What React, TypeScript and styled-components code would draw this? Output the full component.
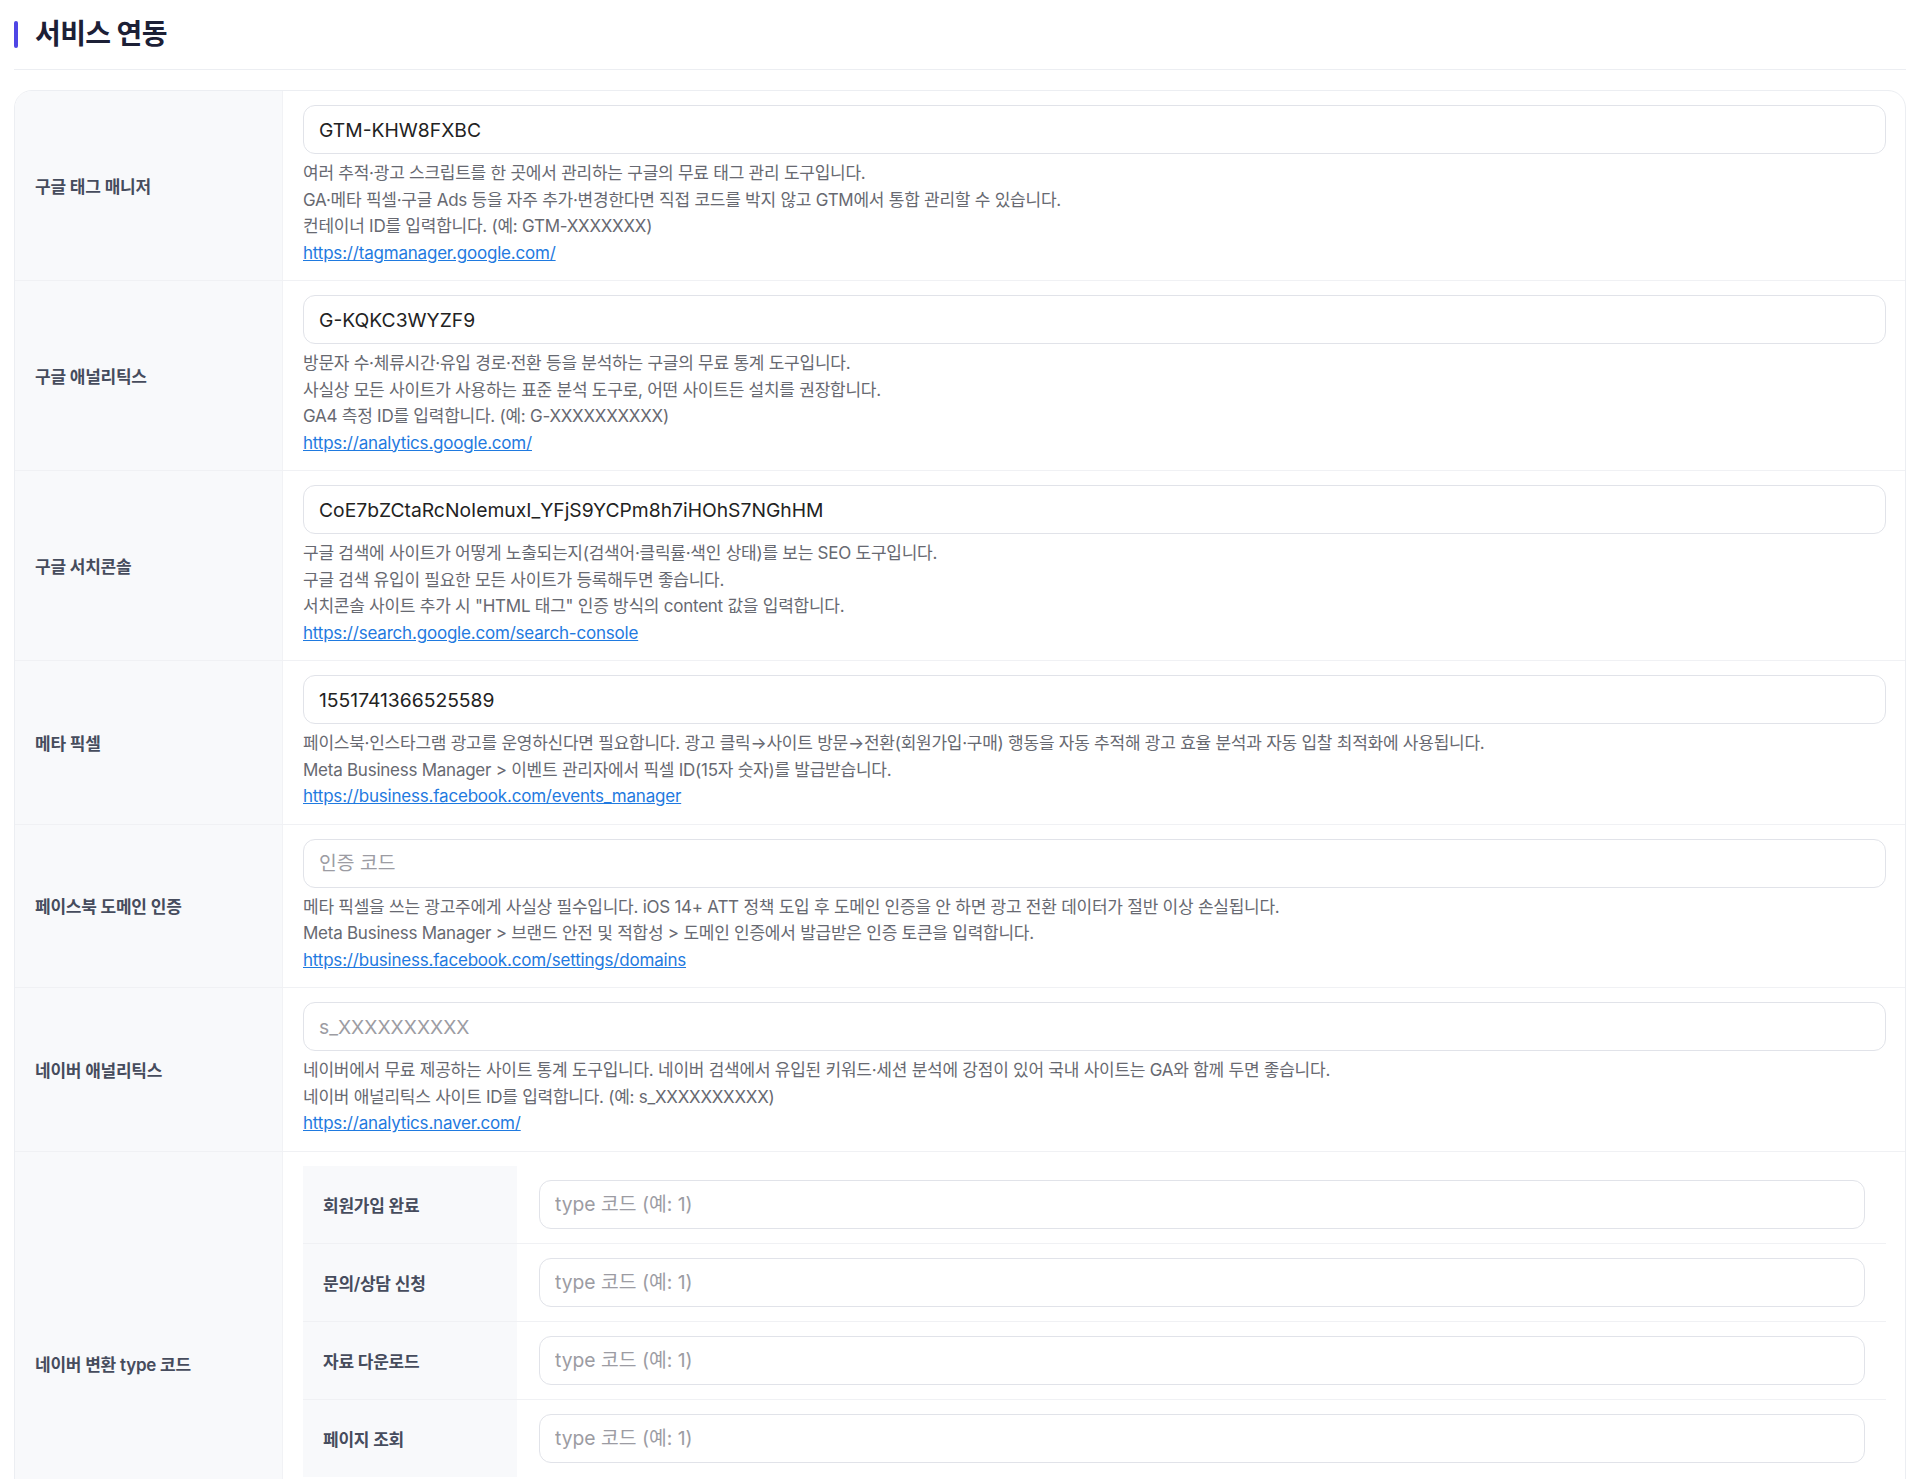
import styled, { createGlobalStyle } from 'styled-components';

interface Field {
  label: string;
  value?: string;
  placeholder?: string;
  lines: string[];
  link: string;
}

const fields: Field[] = [
  {
    label: '구글 태그 매니저',
    value: 'GTM-KHW8FXBC',
    lines: [
      '여러 추적·광고 스크립트를 한 곳에서 관리하는 구글의 무료 태그 관리 도구입니다.',
      'GA·메타 픽셀·구글 Ads 등을 자주 추가·변경한다면 직접 코드를 박지 않고 GTM에서 통합 관리할 수 있습니다.',
      '컨테이너 ID를 입력합니다. (예: GTM-XXXXXXX)',
    ],
    link: 'https://tagmanager.google.com/',
  },
  {
    label: '구글 애널리틱스',
    value: 'G-KQKC3WYZF9',
    lines: [
      '방문자 수·체류시간·유입 경로·전환 등을 분석하는 구글의 무료 통계 도구입니다.',
      '사실상 모든 사이트가 사용하는 표준 분석 도구로, 어떤 사이트든 설치를 권장합니다.',
      'GA4 측정 ID를 입력합니다. (예: G-XXXXXXXXXX)',
    ],
    link: 'https://analytics.google.com/',
  },
  {
    label: '구글 서치콘솔',
    value: 'CoE7bZCtaRcNoIemuxI_YFjS9YCPm8h7iHOhS7NGhHM',
    lines: [
      '구글 검색에 사이트가 어떻게 노출되는지(검색어·클릭률·색인 상태)를 보는 SEO 도구입니다.',
      '구글 검색 유입이 필요한 모든 사이트가 등록해두면 좋습니다.',
      '서치콘솔 사이트 추가 시 "HTML 태그" 인증 방식의 content 값을 입력합니다.',
    ],
    link: 'https://search.google.com/search-console',
  },
  {
    label: '메타 픽셀',
    value: '1551741366525589',
    lines: [
      '페이스북·인스타그램 광고를 운영하신다면 필요합니다. 광고 클릭→사이트 방문→전환(회원가입·구매) 행동을 자동 추적해 광고 효율 분석과 자동 입찰 최적화에 사용됩니다.',
      'Meta Business Manager > 이벤트 관리자에서 픽셀 ID(15자 숫자)를 발급받습니다.',
    ],
    link: 'https://business.facebook.com/events_manager',
  },
  {
    label: '페이스북 도메인 인증',
    placeholder: '인증 코드',
    lines: [
      '메타 픽셀을 쓰는 광고주에게 사실상 필수입니다. iOS 14+ ATT 정책 도입 후 도메인 인증을 안 하면 광고 전환 데이터가 절반 이상 손실됩니다.',
      'Meta Business Manager > 브랜드 안전 및 적합성 > 도메인 인증에서 발급받은 인증 토큰을 입력합니다.',
    ],
    link: 'https://business.facebook.com/settings/domains',
  },
  {
    label: '네이버 애널리틱스',
    placeholder: 's_XXXXXXXXXX',
    lines: [
      '네이버에서 무료 제공하는 사이트 통계 도구입니다. 네이버 검색에서 유입된 키워드·세션 분석에 강점이 있어 국내 사이트는 GA와 함께 두면 좋습니다.',
      '네이버 애널리틱스 사이트 ID를 입력합니다. (예: s_XXXXXXXXXX)',
    ],
    link: 'https://analytics.naver.com/',
  },
];

const conversions = ['회원가입 완료', '문의/상담 신청', '자료 다운로드', '페이지 조회'];

const GlobalStyle = createGlobalStyle`
  body {
    margin: 0;
    background: #fff;
    font-family: Inter, "Noto Sans CJK KR", sans-serif;
  }
  * { box-sizing: border-box; }
`;

export default function App() {
  return (
    <>
      <GlobalStyle />
      <Page>
        <Header>
          <Accent />
          <Title>서비스 연동</Title>
        </Header>
        <Card>
          {fields.map((f) => (
            <Row key={f.label}>
              <Label>{f.label}</Label>
              <Cell>
                <Input defaultValue={f.value} placeholder={f.placeholder} />
                <Help>
                  {f.lines.map((line) => (
                    <div key={line}>{line}</div>
                  ))}
                  <HelpLink href={f.link}>{f.link}</HelpLink>
                </Help>
              </Cell>
            </Row>
          ))}
          <Row>
            <Label>네이버 변환 type 코드</Label>
            <Cell>
              <SubTable>
                {conversions.map((name) => (
                  <SubRow key={name}>
                    <SubLabel>{name}</SubLabel>
                    <SubCell>
                      <Input placeholder="type 코드 (예: 1)" />
                    </SubCell>
                  </SubRow>
                ))}
              </SubTable>
              <Help>
                <div>네이버 검색광고 전환 추적 시 전환 유형별 type 코드를 지정합니다.</div>
                <div>네이버 검색광고 &gt; 도구 &gt; 전환추적 관리에서 확인할 수 있습니다.</div>
                <HelpLink href="https://searchad.naver.com/">https://searchad.naver.com/</HelpLink>
              </Help>
            </Cell>
          </Row>
        </Card>
      </Page>
    </>
  );
}

const Page = styled.div`
  padding: 14px 14px 40px;
`;

const Header = styled.div`
  display: flex;
  align-items: center;
  gap: 17px;
  padding: 2px 0 17px;
  border-bottom: 1px solid #eceef2;
`;

const Accent = styled.span`
  width: 4px;
  height: 27px;
  border-radius: 2px;
  background: #4f46e5;
`;

const Title = styled.h2`
  margin: 0;
  font-size: 28px;
  line-height: 36px;
  font-weight: 700;
  letter-spacing: -0.6px;
  color: #1c2036;
`;

const Card = styled.div`
  margin-top: 20px;
  border: 1px solid #eceef2;
  border-radius: 18px;
  overflow: hidden;
`;

const Row = styled.div`
  display: grid;
  grid-template-columns: 268px 1fr;
  border-bottom: 1px solid #f0f1f4;
`;

const Label = styled.div`
  display: flex;
  align-items: center;
  padding: 0 20px;
  background: #f8f9fb;
  border-right: 1px solid #f1f2f5;
  font-size: 17px;
  font-weight: 600;
  letter-spacing: -0.25px;
  color: #464c5d;
`;

const Cell = styled.div`
  padding: 14px 19px 14px 20px;
  min-width: 0;
`;

const Input = styled.input`
  display: block;
  width: 100%;
  height: 49px;
  padding: 0 15px;
  border: 1px solid #e1e3e9;
  border-radius: 12px;
  background: #fff;
  font-family: Inter, "Noto Sans CJK KR", sans-serif;
  font-size: 19.3px;
  color: #222;
  outline: none;

  &::placeholder {
    color: #9c9ca3;
  }
`;

const Help = styled.div`
  margin-top: 6px;
  font-size: 17px;
  line-height: 26.5px;
  letter-spacing: -0.25px;
  color: #676971;
`;

const HelpLink = styled.a`
  color: #1f7ae0;
  text-decoration: underline;
  letter-spacing: -0.2px;
`;

const SubTable = styled.div`
  display: flex;
  flex-direction: column;
`;

const SubRow = styled.div`
  display: grid;
  grid-template-columns: 214px 1fr;
  border-bottom: 1px solid #f0f1f4;

  &:last-child {
    border-bottom: none;
  }
`;

const SubLabel = styled.div`
  display: flex;
  align-items: center;
  padding: 0 20px;
  background: #f8f9fb;
  font-size: 17px;
  font-weight: 600;
  letter-spacing: -0.25px;
  color: #464c5d;
`;

const SubCell = styled.div`
  padding: 14px 21px 14px 22px;
`;
